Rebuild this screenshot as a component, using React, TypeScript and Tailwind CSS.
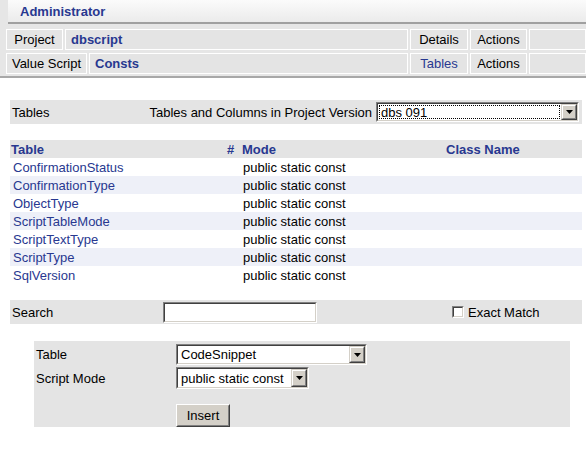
import React from "react";

const navy = "text-[#283890]";

const rows = [
  "ConfirmationStatus",
  "ConfirmationType",
  "ObjectType",
  "ScriptTableMode",
  "ScriptTextType",
  "ScriptType",
  "SqlVersion",
];

const Arrow = () => (
  <div className="flex w-[16px] items-center justify-center border border-t-[#d4d0c8] border-l-[#d4d0c8] border-r-[#404040] border-b-[#404040] bg-[#d4d0c8]">
    <div className="flex h-full w-full items-center justify-center border border-t-white border-l-white border-r-[#808080] border-b-[#808080]">
      <svg width="7" height="4" viewBox="0 0 7 4">
        <path d="M0 0h7L3.5 4z" fill="#000" />
      </svg>
    </div>
  </div>
);

const Select = ({
  value,
  width,
  height,
  focused = false,
}: {
  value: string;
  width: string;
  height: string;
  focused?: boolean;
}) => (
  <div
    className={`${width} ${height} flex border border-t-[#808080] border-l-[#808080] border-r-white border-b-white`}
  >
    <div className="flex flex-1 border border-t-[#404040] border-l-[#404040] border-r-[#d4d0c8] border-b-[#d4d0c8] bg-white">
      <div className="flex flex-1 p-px">
        <div
          className={`flex flex-1 items-center pl-px ${
            focused ? "border border-dotted border-black" : "border border-transparent"
          }`}
        >
          {value}
        </div>
      </div>
      <Arrow />
    </div>
  </div>
);

const HeadCell = ({
  children,
  width,
  center = true,
  value = false,
  link = false,
}: {
  children?: React.ReactNode;
  width?: string;
  center?: boolean;
  value?: boolean;
  link?: boolean;
}) => (
  <div
    className={`flex items-center border border-white bg-[#e4e4e4] ${
      width ?? "flex-1"
    } ${center ? "justify-center" : "pl-[5px]"} ${
      value ? `font-bold ${navy}` : link ? navy : "text-black"
    }`}
  >
    {children}
  </div>
);

const App = () => {
  return (
    <div className="h-[449px] w-[586px] overflow-hidden bg-white font-['Liberation_Sans',Arial,sans-serif] text-[13px] leading-none text-black">
      <div className="border-b-2 border-[#a8a8a8] bg-[#e6e6e6] pb-[2px]">
        <div className={`ml-2 flex h-[24px] items-center border-b-2 border-[#a0a0a0] bg-gradient-to-b from-[#fbfbfb] to-[#ebebeb] pl-3 font-bold ${navy}`}>
          Administrator
        </div>
        <div className="mt-[5px] flex flex-col gap-[3px] pl-[6px]">
          <div className="flex h-[21px] gap-[2px]">
            <HeadCell width="w-[57px]">Project</HeadCell>
            <HeadCell center={false} value>
              dbscript
            </HeadCell>
            <HeadCell width="w-[58px]">Details</HeadCell>
            <HeadCell width="w-[57px]">Actions</HeadCell>
            <HeadCell width="w-[57px]" />
          </div>
          <div className="flex h-[21px] gap-[2px]">
            <HeadCell width="w-[81px]">Value Script</HeadCell>
            <HeadCell center={false} value>
              Consts
            </HeadCell>
            <HeadCell width="w-[58px]" link>
              Tables
            </HeadCell>
            <HeadCell width="w-[57px]">Actions</HeadCell>
            <HeadCell width="w-[57px]" />
          </div>
        </div>
      </div>

      <main className="ml-[10px] mt-[22px] w-[572px]">
        <div className="flex h-[24px] items-center justify-between bg-[#e4e4e4] pl-[2px] pr-[3px]">
          <span>Tables</span>
          <div className="flex items-center gap-[4px]">
            <span>Tables and Columns in Project Version</span>
            <Select value="dbs 091" width="w-[203px]" height="h-[20px]" focused />
          </div>
        </div>

        <div className={`mt-[16px] grid h-[18px] grid-cols-[214px_15px_204px_1fr] items-center bg-[#e4e4e4] font-bold ${navy}`}>
          <span className="pl-px">Table</span>
          <span className="pl-[3px]">#</span>
          <span className="pl-[3px]">Mode</span>
          <span className="pl-[3px]">Class Name</span>
        </div>

        {rows.map((name, i) => (
          <div
            key={name}
            className={`grid h-[18px] grid-cols-[214px_15px_204px_1fr] items-center ${
              i % 2 === 1 ? "bg-[#eef0f8]" : "bg-white"
            }`}
          >
            <span className={`pl-[3px] ${navy}`}>{name}</span>
            <span />
            <span className="pl-[4px]">public static const</span>
            <span />
          </div>
        ))}

        <div className="mt-[16px] flex h-[24px] items-center bg-[#e4e4e4] pl-[2px]">
          <span className="w-[151px]">Search</span>
          <div className="h-[21px] w-[154px] border border-t-[#808080] border-l-[#808080] border-r-white border-b-white">
            <div className="h-full w-full border border-t-[#404040] border-l-[#404040] border-r-[#d4d0c8] border-b-[#d4d0c8] bg-white" />
          </div>
          <div className="ml-[135px] flex items-center gap-[4px]">
            <div className="h-[12px] w-[12px] border border-t-[#808080] border-l-[#808080] border-r-white border-b-white">
              <div className="h-full w-full border border-t-[#404040] border-l-[#404040] border-r-[#d4d0c8] border-b-[#d4d0c8] bg-white" />
            </div>
            <span>Exact Match</span>
          </div>
        </div>

        <div className="ml-[24px] mt-[17px] flex h-[86px] w-[536px] flex-col bg-[#e4e4e4] pt-[3px]">
          <div className="flex items-center">
            <span className="w-[142px] pl-[2px]">Table</span>
            <Select value="CodeSnippet" width="w-[191px]" height="h-[21px]" />
          </div>
          <div className="mt-[2px] flex items-center">
            <span className="w-[142px] pl-[2px]">Script Mode</span>
            <Select value="public static const" width="w-[133px]" height="h-[22px]" />
          </div>
          <div className="mt-[15px] flex pl-[142px]">
            <button
              type="button"
              className="h-[23px] w-[54px] border border-t-white border-l-white border-r-[#404040] border-b-[#404040] bg-[#d4d0c8]"
            >
              <div className="flex h-full w-full items-center justify-center border border-t-[#d4d0c8] border-l-[#d4d0c8] border-r-[#808080] border-b-[#808080]">
                Insert
              </div>
            </button>
          </div>
        </div>
      </main>
    </div>
  );
};

export default App;
